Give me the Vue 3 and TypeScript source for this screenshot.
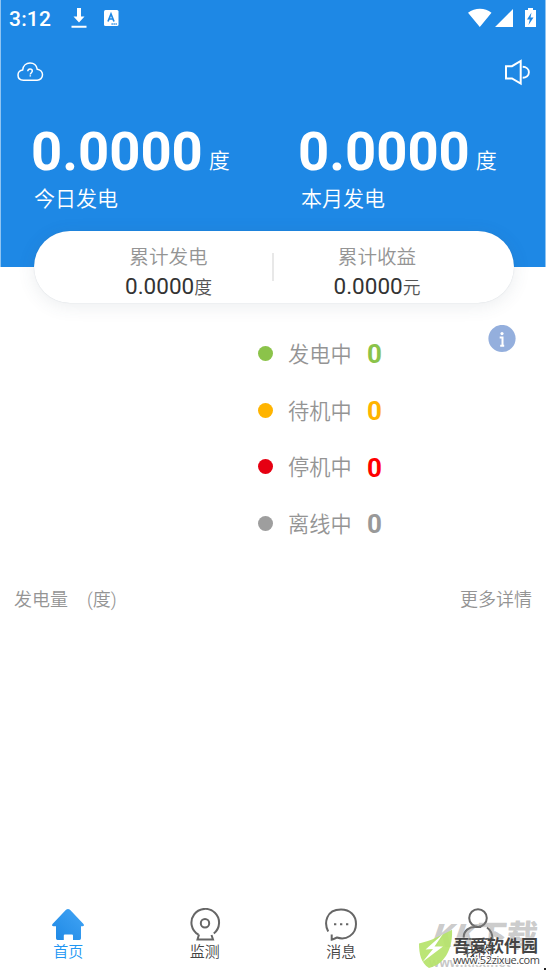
<script setup lang="ts">
interface Metric { label: string; value: string; unit: string }
interface Status { label: string; count: number; color: string; dot: string }

const production: Metric[] = [
  { label: '今日发电', value: '0.0000', unit: '度' },
  { label: '本月发电', value: '0.0000', unit: '度' },
]
const totals: Metric[] = [
  { label: '累计发电', value: '0.0000', unit: '度' },
  { label: '累计收益', value: '0.0000', unit: '元' },
]
const statuses: Status[] = [
  { label: '发电中', count: 0, color: '#8bc34a', dot: '#8bc34a' },
  { label: '待机中', count: 0, color: '#ffb400', dot: '#ffb400' },
  { label: '停机中', count: 0, color: '#ff0000', dot: '#e60012' },
  { label: '离线中', count: 0, color: '#999999', dot: '#9e9e9e' },
]
</script>

<template>
  <div class="screen">
    <header class="hero">
      <div class="statusbar">
        <span class="clock">3:12</span>
        <svg class="download" width="16" height="20" viewBox="0 0 16 20"><path d="M6 0h4v8.500h3.500L8 14.500l-5.500-6H6zM.5 17.700h15v2H.5z" fill="#fff" /></svg>
        <svg class="lang" width="15" height="16" viewBox="0 0 15 16">
          <rect width="14.500" height="16" rx="1.500" fill="#fff" />
          <path d="M4 11.500 7 4l3 7.500M5.200 9h3.700" fill="none" stroke="#1e88e5" stroke-width="1.700" />
          <path d="M7.500 14h6" stroke="#1e88e5" stroke-width="1.300" stroke-dasharray="1.300 .7" />
        </svg>
        <svg class="signals" width="70" height="20" viewBox="0 0 70 20">
          <path d="M0 4.800C7-.6 17-.6 23.500 4.800L11.800 19zM27 19 45 1v18z" fill="#fff" />
          <path d="M60 0h5v2h3v17H57V2h3z" fill="#fff" />
          <path d="M63.500 4.500 59 11.500h2.800l-1.300 5.500 5-7.500h-3z" fill="#1e88e5" />
        </svg>
      </div>
      <div class="toolbar">
        <svg width="27" height="20" viewBox="0 0 27 20" fill="none" stroke="#fff" stroke-width="1.500">
          <path d="M6.500 18.200C2.800 18.200 1 15.800 1 13c0-2.600 2-4.800 4.700-5.100C6.200 3.700 9.300 1.100 13 1.100s6.500 2.500 7.200 6.100C23.300 7.500 25.500 10 25.500 12.800c0 3-2.300 5.400-5.300 5.400z" />
          <path d="M10.800 9.200c0-1.500 1-2.100 2.200-2.100 1.500 0 2.300.9 2.300 2 0 1.600-2 1.700-2 3.500M13.300 13.300v1.200" />
        </svg>
        <svg width="27" height="27" viewBox="0 0 27 27" fill="none" stroke="#fff" stroke-width="2">
          <path d="M2 7.200h6L16.700 2v22.500L8 19.500H2z" />
          <path d="M18.700 7.800c3.500.1 6.200 2.400 6.200 5.500s-2.700 5.400-6.200 5.500" stroke-width="1.900" />
        </svg>
      </div>
      <div class="production">
        <div v-for="m in production" :key="m.label" class="metric">
          <div class="metric-line"><strong>{{ m.value }}</strong><span>{{ m.unit }}</span></div>
          <div class="metric-label">{{ m.label }}</div>
        </div>
      </div>
    </header>

    <section class="totals">
      <div v-for="m in totals" :key="m.label" class="total">
        <div class="total-label">{{ m.label }}</div>
        <div class="total-value">{{ m.value }}<span>{{ m.unit }}</span></div>
      </div>
    </section>

    <section class="states">
      <ul>
        <li v-for="s in statuses" :key="s.label">
          <i class="dot" :style="{ background: s.dot }"></i>
          <span>{{ s.label }}</span>
          <b :style="{ color: s.color }">{{ s.count }}</b>
        </li>
      </ul>
      <svg class="info" width="28" height="28" viewBox="0 0 28 28">
        <circle cx="14" cy="13.500" r="13.600" fill="#94afdd" />
        <circle cx="14" cy="8.600" r="1.600" fill="#fff" />
        <path d="M11.700 12.500h2.800v8M12.200 20.800h4" fill="none" stroke="#fff" stroke-width="2" />
      </svg>
    </section>

    <section class="chart-head">
      <div><span>发电量</span><span class="unit">(度)</span></div>
      <span>更多详情</span>
    </section>

    <nav class="tabs">
      <div class="tab active">
        <svg width="34" height="34" viewBox="0 0 34 34">
          <defs><linearGradient id="home" x1="1" y1="0" x2="0" y2="1"><stop stop-color="#42a5f5" /><stop offset="1" stop-color="#1e88e5" /></linearGradient></defs>
          <path d="M15 1.800q2-1.600 4 0l13.500 14.200q1.300 2-1 2.300H30v12q0 1.700-1.500 1.700H22v-4.500q0-1-1-1h-7.200q-1 0-1 1V32H6.500Q5 32 5 30.300v-12H2.500q-2.300-.3-1-2.300z" fill="url(#home)" />
        </svg>
        <span>首页</span>
      </div>
      <div class="tab">
        <svg width="34" height="34" viewBox="0 0 34 34" fill="none" stroke="#666" stroke-width="2">
          <path d="M10.500 26.700A13.800 13.800 0 1 1 25.800 25.500" /><circle cx="17" cy="15.200" r="4.200" />
          <path d="M11 26.500 9.500 31.500h15.500L23.500 27" />
        </svg>
        <span>监测</span>
      </div>
      <div class="tab">
        <svg width="34" height="34" viewBox="0 0 34 34" fill="none" stroke="#666" stroke-width="2">
          <path d="M4.200 23.500C-.2 15 2 1.500 17 1.500c9 0 15 5.700 15 14.500 0 11-10 16.500-19 13.500-2 1-4 2-5.300 2.200V26.500" />
          <path d="M10 16.200h2.300M16 16.200h2.300M22 16.200h2.300" />
        </svg>
        <span>消息</span>
      </div>
      <div class="tab">
        <svg width="34" height="34" viewBox="0 0 34 34" fill="none" stroke="#666" stroke-width="2">
          <circle cx="17" cy="10" r="8.800" />
          <path d="M2.700 31v-1.500c0-7 5.500-10.500 11-10.500h6.500M26 19.500c3.500 2.500 5.500 6 5.500 11.500M2.700 31h28.800" />
        </svg>
        <span>我的</span>
      </div>
    </nav>

    <div class="watermark" aria-hidden="true">
      <div class="mark-back"><em>KK</em>下载</div>
      <div class="mark-url">www.kkx.net</div>
      <svg class="shield" width="36" height="41" viewBox="0 0 36 41">
        <path d="M1 14.500C13 12 24 6 34 .8 35 16 29 35 11 39 3 34 1 25 1 14.500z" fill="#b6e36c" fill-opacity=".93" />
        <path d="M25 5 7.500 20.500l7.500-.5L4.500 33 25 17.500h-8.500z" fill="#fff" />
      </svg>
      <div class="mark-title">吾爱软件园</div>
      <div class="mark-site">www.52zixue.com</div>
    </div>
    <div class="corner"></div>
  </div>
</template>

<style>
body { margin: 0; background: #fff; }
</style>

<style scoped>
.screen {
  position: relative;
  display: flex;
  flex-direction: column;
  width: 546px;
  height: 970px;
  overflow: hidden;
  background: #fff;
  color: #949494;
  font-family: Roboto, "Noto Sans CJK SC DemiLight", "Noto Sans CJK SC", sans-serif;
  font-weight: 350;
}
svg { display: block; flex: none; }
.hero {
  box-sizing: border-box;
  height: 267px;
  flex: none;
  border-left: 1px solid #8fc4f2;
  border-right: 1px solid #8fc4f2;
  background: #1e88e5;
  color: #fff;
}
.statusbar { display: flex; align-items: center; height: 36px; padding: 0 7px 0 8px; }
.clock { width: 62px; font-size: 21px; font-weight: 500; letter-spacing: .2px; position: relative; top: 1px; }
.lang { margin-left: 17px; }
.signals { margin-left: auto; }
.toolbar { display: flex; justify-content: space-between; align-items: center; height: 71px; padding: 1px 14px 0 16px; box-sizing: border-box; }
.production { display: flex; padding: 13px 0 0 30px; }
.metric { flex: none; width: 267px; }
.metric-line { display: flex; align-items: baseline; height: 64px; line-height: 64px; }
.metric-line strong { font-size: 54.400px; font-weight: 700; }
.metric-line span { margin-left: 6px; font-size: 21px; line-height: 60px; position: relative; top: -2px; }
.metric-label { padding-left: 3px; font-size: 21px; line-height: 30px; }
.totals {
  position: relative;
  display: flex;
  flex: none;
  box-sizing: border-box;
  width: 480px;
  height: 72px;
  margin: -36px 0 0 34px;
  padding-left: 30px;
  border-radius: 36px;
  background: #fff;
  box-shadow: 0 3px 18px rgba(60, 80, 100, .10), 0 0 1px rgba(30, 60, 90, .2);
}
.total { width: 209px; padding-top: 12px; text-align: center; }
.total + .total { width: 208px; position: relative; }
.total + .total::before {
  content: "";
  position: absolute;
  top: 22px;
  left: -1px;
  width: 2px;
  height: 28px;
  background: #e8e8e8;
}
.total-label { font-size: 19.600px; line-height: 30px; }
.total-value { color: #333; font-size: 22.500px; line-height: 27px; font-weight: 400; }
.total-value span { font-size: 17.800px; color: #555; font-weight: 350; }
.states { display: flex; justify-content: space-between; height: 258px; padding: 22px 30px 0 258px; box-sizing: border-box; flex: none; }
ul { margin: 0; padding: 0; list-style: none; }
li { display: flex; align-items: center; height: 56.700px; font-size: 21.200px; }
li span { width: 79px; margin-left: 15px; position: relative; top: -1px; }
li b { font-size: 26px; font-weight: 700; line-height: 30px; position: relative; top: 1px; }
.dot { width: 15px; height: 15px; border-radius: 50%; }
.chart-head { display: flex; justify-content: space-between; margin-top: 26px; padding: 0 14px; font-size: 18px; line-height: 26px; }
.unit { margin-left: 19px; }
.tabs { display: flex; height: 65px; margin-top: auto; color: #444; }
.tab { display: flex; flex: 1; flex-direction: column; align-items: center; padding-top: 2.500px; font-size: 15px; line-height: 22px; }
.tab:nth-child(4) { color: #333; }
.tab.active { color: #2196f3; }
.tab span { margin-top: -.5px; }
.watermark { position: absolute; right: 0; bottom: 0; width: 134px; height: 57px; white-space: nowrap; }
.watermark > * { position: absolute; }
.mark-back { left: 18px; top: 2px; color: rgba(130, 130, 130, .42); font: 900 31px/38px "Noto Sans CJK SC", sans-serif; letter-spacing: -.3px; transform: skewX(-5deg); }
.mark-back em { margin-right: 3px; }
.mark-url { left: 17px; bottom: 0; color: #c6c6c6; font: 700 13px/15px "Liberation Sans", sans-serif; letter-spacing: .3px; }
.shield { left: 6px; top: 16px; }
.mark-title { left: 41px; top: 21px; color: #444; font: 700 17px/22px "Noto Sans CJK SC", sans-serif; -webkit-text-stroke: .3px #fff; paint-order: stroke fill; }
.mark-site { left: 41px; top: 40px; color: #444; font: 400 11px/14px "Open Sans", sans-serif; letter-spacing: -.4px; -webkit-text-stroke: 2px #fff; paint-order: stroke fill; }
.corner { position: absolute; right: 0; bottom: 0; width: 2px; height: 2px; background: #222; }
</style>
